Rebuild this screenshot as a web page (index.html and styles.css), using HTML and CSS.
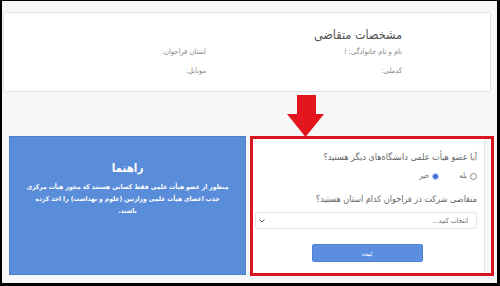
FILE: index.html
```html
<!DOCTYPE html>
<html lang="fa">
<head>
<meta charset="utf-8">
<link rel="stylesheet" href="styles.css">
</head>
<body>
<div class="frame">
  <section class="info-card" dir="rtl">
    <h2 class="info-title">مشخصات متقاضی</h2>
    <div class="info-grid">
      <div class="info-item">نام و نام خانوادگی: ا</div>
      <div class="info-item">استان فراخوان:</div>
      <div class="info-item">کدملی:</div>
      <div class="info-item">موبایل:</div>
    </div>
  </section>

  <div class="gap-area">
    <svg class="arrow" width="37" height="42" viewBox="0 0 37 42">
      <polygon points="10,0 29,0 29,19 37,19 18.5,42 0,19 10,19" fill="#e3151d"/>
    </svg>
  </div>

  <div class="bottom-row">
    <aside class="help-box" dir="rtl">
      <h3 class="help-title">راهنما</h3>
      <p class="help-text">منظور از عضو هیأت علمی فقط کسانی هستند که مجوز هیأت مرکزی<br>جذب اعضای هیأت علمی وزارتین (علوم و بهداشت) را اخذ کرده<br>باشند.</p>
    </aside>

    <form class="form-card" dir="rtl">
      <div class="question">آیا عضو هیأت علمی دانشگاه‌های دیگر هستید؟</div>
      <div class="radio-row">
        <label class="radio"><span class="dot"></span>بله</label>
        <label class="radio"><span class="dot checked"></span>خیر</label>
      </div>
      <div class="question q2">متقاضی شرکت در فراخوان کدام استان هستید؟</div>
      <div class="select">
        <span>انتخاب کنید...</span>
        <svg class="chev" width="6" height="4" viewBox="0 0 6 4"><polyline points="0.5,0.5 3,3 5.5,0.5" fill="none" stroke="#555" stroke-width="1"/></svg>
      </div>
      <div class="btn-wrap"><button type="button" class="submit">ثبت</button></div>
    </form>

    <div class="highlight"></div>
  </div>
</div>
</body>
</html>
```

FILE: styles.css
```css
* { box-sizing: border-box; }
html, body {
  margin: 0;
  padding: 0;
  width: 500px;
  height: 286px;
  overflow: hidden;
}
body {
  font-family: "DejaVu Sans Condensed", "DejaVu Sans", sans-serif;
  background: #000;
}
.frame {
  position: relative;
  margin: 1px 3px 0 2px;
  height: 282px;
  background: #f6f7f9;
  padding: 11px 6px 0 1px;
}
.info-card {
  background: #fff;
  border: 1px solid #e2e4e8;
  border-radius: 2px;
  height: 80px;
  padding: 12px 88px 0 0;
}
.info-title {
  margin: 0;
  font-size: 12.5px;
  font-weight: normal;
  line-height: 20px;
  color: #555;
}
.info-grid {
  display: grid;
  grid-template-columns: 196px 196px;
  row-gap: 5px;
}
.info-item {
  font-size: 7.5px;
  line-height: 14px;
  color: #888;
}
.gap-area {
  height: 44px;
  position: relative;
}
.arrow {
  position: absolute;
  left: 284px;
  top: 3px;
}
.bottom-row {
  position: relative;
  display: flex;
  margin-left: 6px;
  height: 139px;
}
.help-box {
  width: 237px;
  background: #5a8dd9;
  border: 1px solid #4d7fca;
  color: #fff;
  text-align: center;
  padding: 22px 6px 0;
}
.help-title {
  margin: 0;
  font-size: 11.5px;
  line-height: 18px;
  font-weight: bold;
}
.help-text {
  margin: 4px 0 0;
  font-size: 6.6px;
  line-height: 12px;
  font-weight: bold;
  white-space: nowrap;
}
.form-card {
  margin: 0 0 0 4px;
  width: 235px;
  background: #fff;
  border: 1px solid #dfe2e6;
  padding: 13px 7px 0 4px;
}
.question {
  font-size: 9px;
  line-height: 14px;
  color: #666;
}
.radio-row {
  display: flex;
  gap: 20px;
  margin-top: 5px;
  font-size: 7.5px;
  line-height: 14px;
  color: #666;
}
.radio {
  display: flex;
  align-items: center;
  gap: 3px;
}
.dot {
  width: 7px;
  height: 7px;
  border-radius: 50%;
  border: 1px solid #888;
  background: #fff;
}
.dot.checked {
  border: 1px solid #9fb8ea;
  background: radial-gradient(circle, #3a6fd8 0 2.2px, #fff 2.6px);
}
.q2 { margin-top: 9px; }
.select {
  margin-top: 6px;
  height: 17px;
  border: 1px solid #e4e6ea;
  border-radius: 2px;
  display: flex;
  align-items: center;
  justify-content: space-between;
  padding: 0 8px 0 3px;
  font-size: 7px;
  color: #666;
}
.btn-wrap {
  display: flex;
  justify-content: center;
  margin-top: 15px;
  padding-left: 2px;
}
.submit {
  width: 111px;
  height: 18px;
  border: 1px solid #4f82d0;
  border-radius: 2px;
  background: #5b8ede;
  color: #fff;
  font-family: "DejaVu Sans Condensed", "DejaVu Sans", sans-serif;
  font-size: 7.5px;
  padding: 0;
}
.highlight {
  position: absolute;
  left: 241px;
  top: 0;
  width: 244px;
  height: 140px;
  border: 3px solid #d8161f;
  pointer-events: none;
}
```
